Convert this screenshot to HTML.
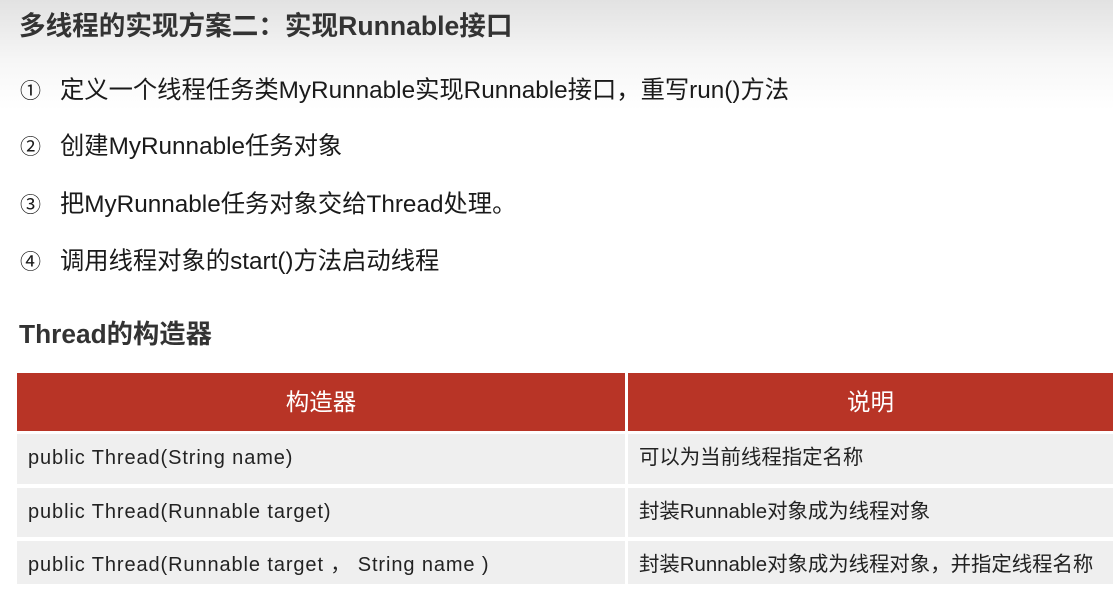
<!DOCTYPE html>
<html><head><meta charset="utf-8"><style>
html,body{margin:0;background:#fff}
body{width:1113px;height:584px;overflow:hidden;font-family:"Liberation Sans","Noto Sans CJK SC",sans-serif;color:#222;position:relative}
.bg{position:absolute;left:0;top:0;width:1113px;height:120px;background:linear-gradient(#e2e2e2 0px,#f6f6f6 60px,#fff 110px)}
.a{position:absolute;white-space:nowrap}
.t{font-weight:bold;font-size:26.6px;color:#333}
.i{font-size:24.3px;color:#1a1a1a}
.i span{display:inline-block;width:40px;font-size:21px}
.h{position:absolute;top:373px;height:58px;background:#b83426;color:#fff;font-size:23.5px;line-height:58px;text-align:center}
.r{position:absolute;background:#efefef;font-size:20px;line-height:48px;padding-left:11px;box-sizing:border-box;color:#222}
.c{font-size:20.4px}
.l{letter-spacing:0.9px}
</style></head><body>
<div class="bg"></div>
<div class="a t" style="left:19px;top:4px">多线程的实现方案二：实现Runnable接口</div>
<div class="a i" style="left:20px;top:70px"><span>①</span>定义一个线程任务类MyRunnable实现Runnable接口，重写run()方法</div>
<div class="a i" style="left:20px;top:126px"><span>②</span>创建MyRunnable任务对象</div>
<div class="a i" style="left:20px;top:184px"><span>③</span>把MyRunnable任务对象交给Thread处理。</div>
<div class="a i" style="left:20px;top:241px"><span>④</span>调用线程对象的start()方法启动线程</div>
<div class="a t" style="left:19px;top:312px;font-size:26.3px">Thread的构造器</div>
<div class="h" style="left:17px;width:608px">构造器</div>
<div class="h" style="left:628px;width:485px">说明</div>
<div class="r l" style="left:17px;top:434px;width:608px;height:50px">public Thread(String name)</div>
<div class="r c" style="left:628px;top:434px;width:485px;height:50px">可以为当前线程指定名称</div>
<div class="r l" style="left:17px;top:488px;width:608px;height:49px">public Thread(Runnable target)</div>
<div class="r c" style="left:628px;top:488px;width:485px;height:49px">封装Runnable对象成为线程对象</div>
<div class="r l" style="left:17px;top:541px;width:608px;height:43px">public Thread(Runnable target ， String name )</div>
<div class="r c" style="left:628px;top:541px;width:485px;height:43px">封装Runnable对象成为线程对象，并指定线程名称</div>
</body></html>
